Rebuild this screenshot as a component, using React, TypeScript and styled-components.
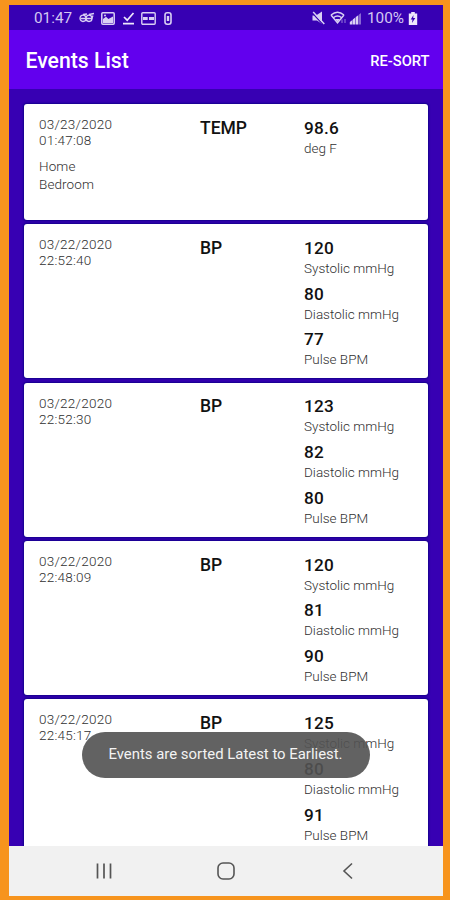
import React from "react";
import styled, { createGlobalStyle } from "styled-components";

const GlobalStyle = createGlobalStyle`
  * { box-sizing: border-box; }
  body { margin: 0; background: #f7941d; font-family: Roboto, "Liberation Sans", sans-serif; }
`;

const Frame = styled.div`
  width: 450px;
  height: 900px;
  padding: 5px 7.5px 4px 8.5px;
  background: #f7941d;
  overflow: hidden;
`;

const Screen = styled.div`
  position: relative;
  height: 891px;
  display: flex;
  flex-direction: column;
  background: #3700b3;
`;

const StatusBar = styled.div`
  height: 25px;
  flex: none;
  display: flex;
  align-items: center;
  justify-content: space-between;
  padding: 1px 24.5px 0 25.5px;
  color: #d3c8f2;
  font-size: 15.3px;
`;

const StatusGroup = styled.div`
  display: flex;
  align-items: center;
`;

const StatusText = styled.span<{ $width: number; $gap?: number }>`
  width: ${(p) => p.$width}px;
  margin-left: ${(p) => p.$gap ?? 0}px;
  white-space: nowrap;
  line-height: 24px;
`;

const StatusIcon = styled.svg<{ $gap: number }>`
  display: block;
  flex: none;
  margin-left: ${(p) => p.$gap}px;
`;

const AppBar = styled.header`
  height: 59px;
  flex: none;
  display: flex;
  align-items: center;
  justify-content: space-between;
  padding: 2px 13px 0 17px;
  background: #6200ee;
  color: #fff;
`;

const Title = styled.h1`
  margin: 0;
  font-size: 21.2px;
  line-height: 26px;
  font-weight: 500;
`;

const SortButton = styled.button`
  border: 0;
  padding: 0;
  background: none;
  color: #fff;
  font: 500 14.7px/20px Roboto, sans-serif;
`;

const List = styled.main`
  flex: 1;
  min-height: 0;
  overflow: hidden;
  display: flex;
  flex-direction: column;
  gap: 4.2px;
  padding: 15px 15px 0 15.5px;
`;

const Card = styled.article<{ $height: number }>`
  height: ${(p) => p.$height}px;
  flex: none;
  display: grid;
  grid-template-columns: 161px 104px 1fr;
  padding: 12.6px 0 0 15px;
  border-radius: 3px;
  background: #fff;
  box-shadow: 0 0 2px 1px #14008c;
`;

const Stamp = styled.div`
  margin-top: -0.6px;
  color: #303030;
  font-size: 13.5px;
  line-height: 16px;
  font-weight: 300;
  letter-spacing: 0.25px;
`;

const Place = styled.div`
  margin-top: 9px;
  line-height: 18px;
  letter-spacing: 0.1px;
`;

const Kind = styled.div`
  color: #111;
  font-size: 17.5px;
  line-height: 22px;
  font-weight: 500;
`;

const Reading = styled.div`
  height: 45.8px;
`;

const Value = styled.div`
  color: #111;
  font-size: 17.2px;
  line-height: 22px;
  font-weight: 500;
  letter-spacing: 0.2px;
`;

const Unit = styled.div`
  color: #303030;
  font-size: 13.5px;
  line-height: 19px;
  font-weight: 300;
`;

const Toast = styled.div`
  position: absolute;
  left: 73px;
  top: 726.5px;
  width: 288px;
  height: 46.5px;
  border-radius: 24px;
  display: flex;
  align-items: center;
  justify-content: center;
  padding-bottom: 1px;
  background: rgba(82, 82, 82, 0.91);
  color: #f3f3f3;
  font-size: 14.9px;
  white-space: nowrap;
`;

const NavBar = styled.nav`
  height: 50px;
  flex: none;
  display: grid;
  grid-template-columns: 1fr 54px 1fr;
  align-items: center;
  justify-items: center;
  background: #f1f1f1;
`;

interface Measure {
  value: string;
  unit: string;
}

interface HealthEvent {
  date: string;
  time: string;
  kind: string;
  place?: string[];
  readings: Measure[];
}

const bp = (time: string, sys: string, dia: string, pulse: string): HealthEvent => ({
  date: "03/22/2020",
  time,
  kind: "BP",
  readings: [
    { value: sys, unit: "Systolic mmHg" },
    { value: dia, unit: "Diastolic mmHg" },
    { value: pulse, unit: "Pulse BPM" },
  ],
});

const events: HealthEvent[] = [
  {
    date: "03/23/2020",
    time: "01:47:08",
    kind: "TEMP",
    place: ["Home", "Bedroom"],
    readings: [{ value: "98.6", unit: "deg F" }],
  },
  bp("22:52:40", "120", "80", "77"),
  bp("22:52:30", "123", "82", "80"),
  bp("22:48:09", "120", "81", "90"),
  bp("22:45:17", "125", "80", "91"),
];

const ink = "#d9d0f4";

function LeftIcons() {
  return (
    <>
      <StatusIcon $gap={5} width="16" height="12" viewBox="0 0 16 12" fill="none" stroke={ink} strokeWidth="1.3">
        <ellipse cx="4" cy="6.3" rx="3" ry="3.2" />
        <ellipse cx="10" cy="6.3" rx="3" ry="3.2" />
        <path d="M1.5 6.5H12.5M4 2.5L8 2M10 2.5L15 1.5M14 3.5L12.5 7" />
      </StatusIcon>
      <StatusIcon $gap={6} width="14" height="13" viewBox="0 0 14 13">
        <rect x=".8" y=".8" width="12.4" height="11.4" rx="1" fill="none" stroke={ink} strokeWidth="1.5" />
        <path d="M2 11V7l3-2.2 2.4 2.1L12 4.5V11z" fill={ink} />
        <circle cx="4" cy="3.5" r="1" fill={ink} />
      </StatusIcon>
      <StatusIcon $gap={7} width="13" height="13" viewBox="0 0 13 13" fill="none" stroke="#eee8fc" strokeWidth="1.7">
        <path d="M2 5l3.2 3.2L11.5 1M1 11.7h11" />
      </StatusIcon>
      <StatusIcon $gap={6} width="15" height="13" viewBox="0 0 15 13">
        <rect x=".8" y=".8" width="13.4" height="11.4" rx="1" fill="none" stroke={ink} strokeWidth="1.4" />
        <path d="M2 5h4.7v3H2zM8 5h5v3H8z" fill={ink} />
      </StatusIcon>
      <StatusIcon $gap={8} width="8" height="13" viewBox="0 0 8 13">
        <rect x="1" y=".8" width="6" height="11.4" rx="2.2" fill="none" stroke={ink} strokeWidth="1.6" />
        <path d="M2.8 4h2.4v5H2.8z" fill={ink} />
      </StatusIcon>
    </>
  );
}

function RightIcons() {
  return (
    <>
      <StatusIcon $gap={0} width="14" height="14" viewBox="0 0 14 14">
        <path d="M.5 4.5H4L10 .5v12.5L5 9.5H.5z" fill={ink} />
        <path d="M.5 2L11 13.5" stroke="#3700b3" strokeWidth="1.3" />
        <path d="M1.2 1L12.3 13" stroke={ink} strokeWidth="1.5" />
      </StatusIcon>
      <StatusIcon $gap={4} width="17" height="14" viewBox="0 0 17 14" fill="none" stroke={ink} strokeWidth="1.4">
        <path d="M1 4Q7.5-1.6 14 4M3.4 6.7Q7.5 3.4 11.6 6.7M1 4L7.5 12L14 4" />
        <path d="M5 8h5L7.5 11z" fill={ink} stroke="none" />
        <path d="M12 12V8.5M15 8v4" strokeWidth="1" opacity=".6" />
      </StatusIcon>
      <StatusIcon $gap={2} width="13" height="13" viewBox="0 0 13 13" fill={ink}>
        <path d="M.8 12.5V10L3.4 8v4.5zM3.8 12.5V7.4l2.5-1.8v6.9zM6.8 12.5V5l2.5-1.8v9.3z" />
        <path d="M9.8 12.5V2.7L12 1v11.5z" opacity=".5" />
      </StatusIcon>
    </>
  );
}

export default function App() {
  return (
    <>
      <GlobalStyle />
      <Frame>
        <Screen>
          <StatusBar>
            <StatusGroup>
              <StatusText $width={40}>01:47</StatusText>
              <LeftIcons />
            </StatusGroup>
            <StatusGroup>
              <RightIcons />
              <StatusText $width={41} $gap={5}>100%</StatusText>
              <StatusIcon $gap={0} width="10" height="13" viewBox="0 0 10 13">
                <path d="M3.2 0h3.6v1.5h2.4V13H.8V1.5h2.4z" fill="#eee8fc" />
                <path d="M5.5 3L2.7 7.5h1.8L4 11 7.3 6H5.2z" fill="#3700b3" />
              </StatusIcon>
            </StatusGroup>
          </StatusBar>
          <AppBar>
            <Title>Events List</Title>
            <SortButton>RE-SORT</SortButton>
          </AppBar>
          <List>
            {events.map((event) => (
              <Card key={event.time} $height={event.place ? 116 : 154.2}>
                <Stamp>
                  <div>{event.date}</div>
                  <div>{event.time}</div>
                  {event.place && (
                    <Place>
                      {event.place.map((line) => (
                        <div key={line}>{line}</div>
                      ))}
                    </Place>
                  )}
                </Stamp>
                <Kind>{event.kind}</Kind>
                <div>
                  {event.readings.map((r) => (
                    <Reading key={r.unit}>
                      <Value>{r.value}</Value>
                      <Unit>{r.unit}</Unit>
                    </Reading>
                  ))}
                </div>
              </Card>
            ))}
          </List>
          <NavBar>
            <svg width="18" height="18" viewBox="0 0 18 18" stroke="#555" strokeWidth="1.7">
              <path d="M2.5 1.5v15M9 1.5v15M15.5 1.5v15" />
            </svg>
            <svg width="20" height="20" viewBox="0 0 20 20" fill="none" stroke="#555" strokeWidth="1.6">
              <rect x="2" y="2" width="16" height="16" rx="5" />
            </svg>
            <svg width="14" height="18" viewBox="0 0 14 18" fill="none" stroke="#555" strokeWidth="1.6">
              <path d="M11 1.5L3 9l8 7.5" />
            </svg>
          </NavBar>
          <Toast>Events are sorted Latest to Earliest.</Toast>
        </Screen>
      </Frame>
    </>
  );
}
